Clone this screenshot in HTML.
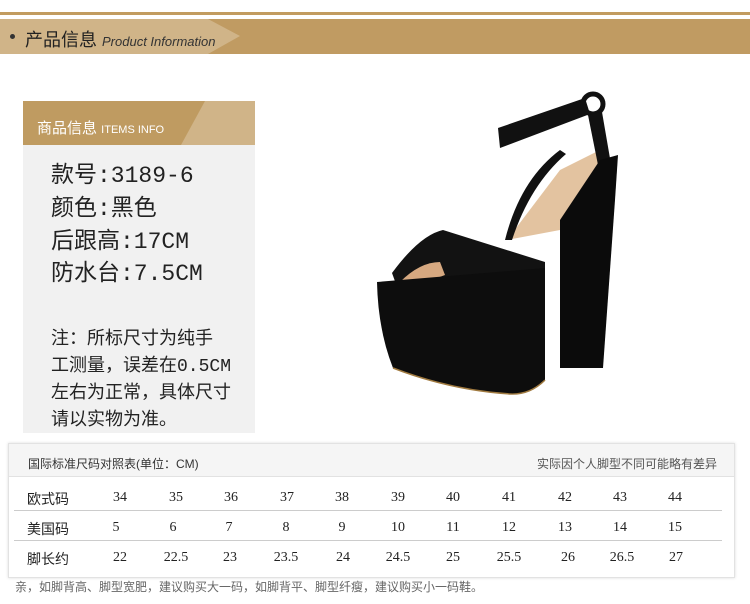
<!DOCTYPE html>
<html><head><meta charset="utf-8"><style>
*{margin:0;padding:0;box-sizing:border-box}
body{width:750px;height:604px;background:#fff;position:relative;overflow:hidden;font-family:"Liberation Sans","Noto Sans CJK SC",sans-serif}
.a{position:absolute;white-space:nowrap}
.hd{font-family:"Liberation Mono","WenQuanYi Zen Hei",monospace;color:#222;font-size:23px;left:51px}
.nt{font-family:"Liberation Mono","WenQuanYi Zen Hei",monospace;color:#222;font-size:18px;left:51px;line-height:27px}
.row{position:absolute;left:9px;width:726px;height:30px;font-size:14px;color:#222}
.row span{position:absolute;top:8px;font-family:"Liberation Serif","Noto Sans CJK SC",serif;transform:translateX(-50%)}
.row span.l{font-family:"Liberation Sans","Noto Sans CJK SC",sans-serif;transform:none;left:18px;top:7px}
</style></head><body>
<div class="a" style="left:0;top:12px;width:750px;height:3px;background:#c29c60"></div>
<svg class="a" style="left:0;top:19px" width="750" height="35">
<rect width="750" height="35" fill="#c09b62"/>
<polygon points="0,0 208,0 240,17 208,35 0,35" fill="#d0b488"/>
</svg>
<div class="a" style="left:10px;top:34px;width:5px;height:5px;border-radius:50%;background:#333"></div>
<div class="a" style="left:25px;top:26px;font-size:18px;color:#222">产品信息 <i style="font-size:13px;color:#333">Product Information</i></div>

<div class="a" style="left:23px;top:101px;width:232px;height:332px;background:#f1f1f1"></div>
<svg class="a" style="left:23px;top:101px" width="232" height="44">
<rect width="232" height="44" fill="#bf9b61"/>
<polygon points="182,0 232,0 232,44 158,44" fill="#d0b488"/>
</svg>
<div class="a" style="left:37px;top:117px;font-size:15px;color:#fff">商品信息 <span style="font-size:11px">ITEMS INFO</span></div>
<div class="a hd" style="top:155px">款号:3189-6</div>
<div class="a hd" style="top:188px">颜色:黑色</div>
<div class="a hd" style="top:221px">后跟高:17CM</div>
<div class="a hd" style="top:253px">防水台:7.5CM</div>
<div class="a nt" style="top:327px">注：所标尺寸为纯手<br>工测量，误差在0.5CM<br>左右为正常，具体尺寸<br>请以实物为准。</div>

<svg class="a" style="left:0;top:0" width="750" height="440">
<path d="M507,240 L560,170 L600,150 L600,200 L560,230 Z" fill="#e3c3a0"/>
<path d="M505,240 Q520,180 560,150 L566,154 Q530,185 512,240Z" fill="#111"/>
<path d="M498,128 L585,98 L590,114 L500,148 Z" fill="#111"/>
<circle cx="593" cy="104" r="10" fill="none" stroke="#111" stroke-width="5"/>
<path d="M588,115 L602,112 L612,170 L600,175 Z" fill="#111"/>
<path d="M560,220 L600,160 L618,155 L615,200 L603,368 L560,368 Z" fill="#0b0b0b"/>
<path d="M392,273 Q420,235 443,230 L545,262 L545,280 L450,300 L400,295 Z" fill="#121212"/>
<path d="M400,282 Q420,262 440,262 L445,275 L405,290Z" fill="#d6a880"/>
<path d="M377,282 L545,268 L545,380 Q530,395 510,394 Q450,390 393,368 Q378,330 377,282Z" fill="#0d0d0d"/>
<path d="M393,368 Q450,390 510,394 Q530,395 545,380" fill="none" stroke="#a07a40" stroke-width="1.5"/>
</svg>

<div class="a" style="left:8px;top:443px;width:727px;height:135px;border:1px solid #e2e2e2;box-shadow:0 0 3px #ddd;background:#fff"></div>
<div class="a" style="left:9px;top:444px;width:725px;height:33px;background:#f5f5f5;border-bottom:1px solid #e2e2e2"></div>
<div class="a" style="left:28px;top:455px;font-size:12px;color:#333">国际标准尺码对照表(单位：CM)</div>
<div class="a" style="left:537px;top:455px;font-size:12px;color:#555">实际因个人脚型不同可能略有差异</div>
<div class="a" style="left:14px;top:510px;width:708px;height:1px;background:#ccc"></div>
<div class="a" style="left:14px;top:540px;width:708px;height:1px;background:#ccc"></div>
<div class="row" style="top:482px"><span class="l">欧式码</span><span style="left:111px">34</span><span style="left:167px">35</span><span style="left:222px">36</span><span style="left:278px">37</span><span style="left:333px">38</span><span style="left:389px">39</span><span style="left:444px">40</span><span style="left:500px">41</span><span style="left:556px">42</span><span style="left:611px">43</span><span style="left:666px">44</span></div>
<div class="row" style="top:512px"><span class="l">美国码</span><span style="left:107px">5</span><span style="left:164px">6</span><span style="left:220px">7</span><span style="left:277px">8</span><span style="left:333px">9</span><span style="left:389px">10</span><span style="left:444px">11</span><span style="left:500px">12</span><span style="left:556px">13</span><span style="left:611px">14</span><span style="left:666px">15</span></div>
<div class="row" style="top:542px"><span class="l">脚长约</span><span style="left:111px">22</span><span style="left:167px">22.5</span><span style="left:221px">23</span><span style="left:277px">23.5</span><span style="left:334px">24</span><span style="left:389px">24.5</span><span style="left:444px">25</span><span style="left:500px">25.5</span><span style="left:559px">26</span><span style="left:613px">26.5</span><span style="left:667px">27</span></div>
<div class="a" style="left:15px;top:578px;font-size:12px;color:#666">亲，如脚背高、脚型宽肥，建议购买大一码，如脚背平、脚型纤瘦，建议购买小一码鞋。</div>
</body></html>
